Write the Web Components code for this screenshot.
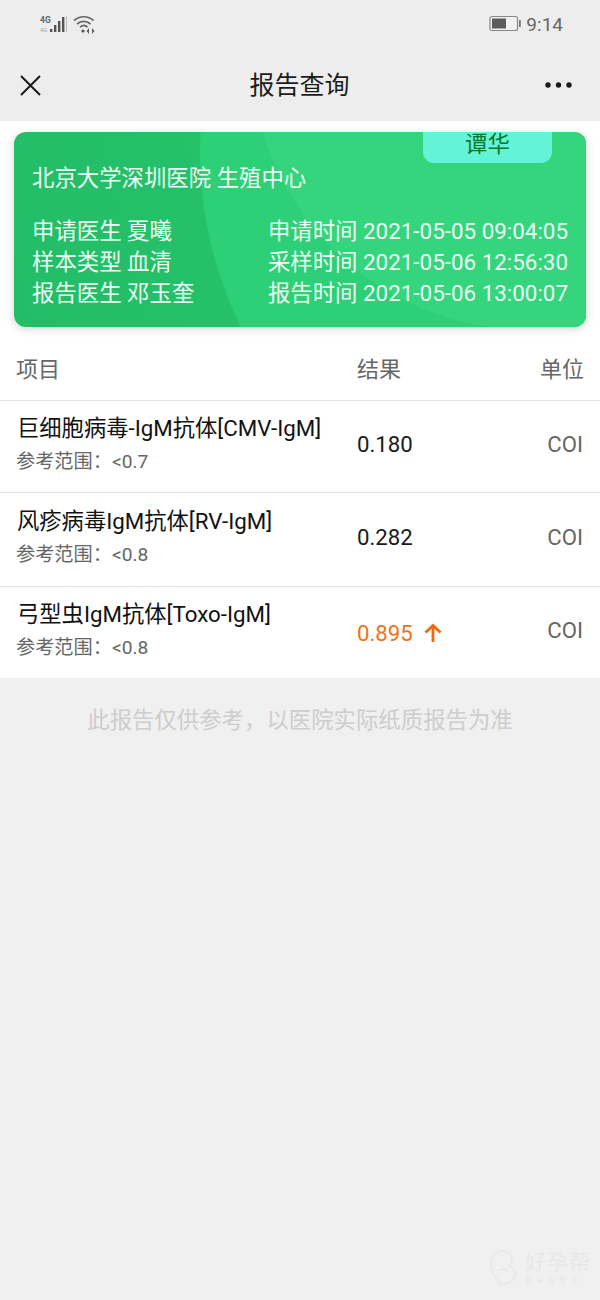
<!DOCTYPE html>
<html lang="zh"><head><meta charset="utf-8"><style>
html,body{margin:0;padding:0;background:#f0f0f0}
body{width:600px;height:1300px;overflow:hidden;font-family:Roboto,"Noto Sans CJK SC",sans-serif}
</style></head><body>
<report-app></report-app>
<script>
const FONT='Roboto,"Noto Sans CJK SC",sans-serif';
class StatusBar extends HTMLElement{constructor(){super();this.attachShadow({mode:'open'}).innerHTML=`<style>
:host{display:flex;height:49px;box-sizing:border-box;padding:0 37px 0 40px;align-items:flex-start;justify-content:space-between;color:#666}
.l{display:flex;gap:5px;margin-top:15px}.r{display:flex;align-items:flex-start;gap:5px;margin-top:15px}
.t{font-size:19px;line-height:20px;color:#666}
svg{display:block}
</style>
<div class="l">
<svg width="28" height="20" viewBox="0 0 28 20"><text x="0" y="8" font-family="Roboto" font-size="8.5" font-weight="700" fill="#666">4G</text><text x="0" y="17" font-family="Roboto" font-size="6" fill="#aaa">4G</text><g fill="#555"><rect x="10" y="14" width="2.4" height="3"/><rect x="14" y="10" width="2.4" height="7"/><rect x="18" y="6" width="2.4" height="11"/><rect x="22" y="2" width="2.4" height="15"/></g><rect x="26" y="1" width="1" height="16" fill="#bbb"/></svg>
<svg width="22" height="20" viewBox="0 0 22 20" fill="none" stroke="#666" stroke-width="1.7"><path d="M1 5.5C6.500 .5 15 .5 20.500 5.500M4 9C8 5.500 13.500 5.500 17.500 9M7 12.200C9.500 10 12.500 10 14.500 12.200"/><circle cx="10" cy="16" r="1.600" fill="#555" stroke="none"/><path d="M15.500 13.500v5M19.500 13.500v5" stroke-width="1"/><path d="M13.500 16l2-2v4zM21.500 16l-2-2v4z" fill="#555" stroke="none"/></svg>
</div>
<div class="r">
<svg width="32" height="18" viewBox="0 0 32 18"><rect x="1" y="1.500" width="27.500" height="14" rx="2" fill="#f0f0f0" stroke="#888" stroke-width="1.200"/><rect x="3" y="3.500" width="14" height="10" fill="#5c5c5c"/><rect x="30" y="5" width="1.800" height="7" rx=".6" fill="#777"/></svg>
<span class="t">9:14</span></div>`}}
class NavBar extends HTMLElement{constructor(){super();this.attachShadow({mode:'open'}).innerHTML=`<style>
:host{display:flex;height:72px;box-sizing:border-box;padding:0 28px 0 20px;align-items:center;justify-content:space-between;color:#1c1c1c}
.t{font-size:25px;line-height:30px;font-weight:400;flex:1;text-align:center;margin-left:13px;transform:translateY(1px)}svg{display:block}
</style>
<svg width="21" height="21" viewBox="0 0 21 21" stroke="#1a1a1a" stroke-width="2" fill="none"><path d="M1 1l19 19M20 1L1 20"/></svg>
<div class="t"><slot></slot></div>
<svg width="27" height="8" viewBox="0 0 27 8" fill="#1a1a1a"><circle cx="3" cy="4" r="2.700"/><circle cx="13.500" cy="4" r="2.700"/><circle cx="24" cy="4" r="2.700"/></svg>`}}
class ReportCard extends HTMLElement{constructor(){super();this.attachShadow({mode:'open'}).innerHTML=`<style>
:host{display:block;position:relative;height:195px;box-sizing:border-box;border-radius:12px;overflow:hidden;background:linear-gradient(75deg,#22bd66,#2ac971);padding:30px 18px 0 18px;color:#eefff5}
.c1,.c2{position:absolute;border-radius:50%}
.c1{left:186px;top:-374px;width:788px;height:788px;background:#2dcf77}
.c2{left:236px;top:-362px;width:560px;height:560px;background:#34d57d}
.bg{position:absolute;inset:0;overflow:hidden}
.tag{position:absolute;left:409px;top:0;width:129px;height:31px;box-sizing:border-box;border-radius:0 0 11px 11px;background:#63f3d8;color:#0a7a22;text-align:center;font-size:22.400px;line-height:25px}
.h{position:relative;font-size:22.400px;line-height:32px}
.g{position:relative;display:flex;justify-content:space-between;margin-top:22px;font-size:22.400px;line-height:31px}
.right{white-space:nowrap}
</style><div class="bg"><div class="c1"></div><div class="c2"></div></div>
<div class="tag">谭华</div>
<div class="h">北京大学深圳医院 生殖中心</div>
<div class="g"><div>申请医生 夏曦<br>样本类型 血清<br>报告医生 邓玉奎</div>
<div class="right">申请时间 2021-05-05 09:04:05<br>采样时间 2021-05-06 12:56:30<br>报告时间 2021-05-06 13:00:07</div></div>`}}
const grid='display:grid;grid-template-columns:341px 1fr 80px;';
class TableHead extends HTMLElement{constructor(){super();this.attachShadow({mode:'open'}).innerHTML=`<style>
:host{${grid}height:57px;box-sizing:border-box;padding:0 16px 10px;align-items:center;background:#fff;border-bottom:1px solid #e4e4e4;font-size:22px;color:#666}
.u{text-align:right}</style><div>项目</div><div>结果</div><div class="u">单位</div>`}}
class ResultRow extends HTMLElement{constructor(){super();const a=k=>this.getAttribute(k);const hi=this.hasAttribute('high');this.attachShadow({mode:'open'}).innerHTML=`<style>
:host{${grid}box-sizing:border-box;padding:0 16px 6px;align-items:center;background:#fff;border-bottom:1px solid #e4e4e4}
:host(:last-child){border-bottom:0}
.n{font-size:22.300px;line-height:30px;color:#111;white-space:nowrap;margin-top:-1px;margin-left:1px}
.r{font-size:19.200px;line-height:24px;color:#666;margin-top:7px}
.v{font-size:22.200px;color:${hi?'#ee7317':'#1a1a1a'};display:flex;align-items:center;gap:10px;${hi?'transform:translateY(3px);':''}}
.u{text-align:right;font-size:22.200px;color:#666;margin-right:1px}
svg{display:block}
</style><div><div class="n">${a('name')}</div><div class="r">参考范围：&lt;${a('range')}</div></div>
<div class="v">${a('value')}${hi?'<svg width="20" height="20" viewBox="0 0 20 20" fill="none" stroke="#ee6a0f" stroke-width="2.800"><path d="M10 19V2.500M2.500 9.500L10 2.500l7.500 7"/></svg>':''}</div><div class="u">COI</div>`}}
class WaterMark extends HTMLElement{constructor(){super();this.attachShadow({mode:'open'}).innerHTML=`<style>
:host{position:absolute;left:490px;top:1250px;display:flex;gap:9px;color:#e7e7e7}
.a{font-size:21px;line-height:24px;white-space:nowrap;letter-spacing:1px}.b{font-size:7px;line-height:10px;letter-spacing:4.500px;white-space:nowrap;margin-top:2px}
</style><svg width="26" height="38" viewBox="0 0 26 38" fill="none" stroke="#e7e7e7" stroke-width="1.500"><path d="M12 35C4 28 1 20 1 13C1 6 6 1 12 1C18 1 22 5 22 10C22 13 20 15 18 16C22 17 25 20 25 24C25 29 20 33 12 35Z"/><path d="M8 21C11 18 16 19 18 22"/></svg><div><div class="a">好孕帮</div><div class="b">备孕好帮手</div></div>`}}
class ReportApp extends HTMLElement{constructor(){super();this.attachShadow({mode:'open'}).innerHTML=`<style>
:host{display:block;position:relative;height:1300px;font-family:${FONT};background:#f0f0f0}
.top{background:#ededed}
.cardwrap{background:#fff;padding:11px 14px 17px}
report-card{box-shadow:0 2px 8px rgba(40,60,50,.22)}
.foot{text-align:center;font-size:22.400px;line-height:28px;color:#cdcdcd;margin-top:28px}
.rows result-row:nth-child(1){height:92px}.rows result-row:nth-child(2){height:94px}.rows result-row:nth-child(3){height:91px}
</style>
<div class="top"><status-bar></status-bar><nav-bar>报告查询</nav-bar></div>
<div class="cardwrap"><report-card></report-card></div>
<table-head></table-head>
<div class="rows">
<result-row name="巨细胞病毒-IgM抗体[CMV-IgM]" range="0.7" value="0.180"></result-row>
<result-row name="风疹病毒IgM抗体[RV-IgM]" range="0.8" value="0.282"></result-row>
<result-row name="弓型虫IgM抗体[Toxo-IgM]" range="0.8" value="0.895" high></result-row>
</div>
<div class="foot">此报告仅供参考，以医院实际纸质报告为准</div>
<water-mark></water-mark>`}}
customElements.define('status-bar',StatusBar);
customElements.define('nav-bar',NavBar);
customElements.define('report-card',ReportCard);
customElements.define('table-head',TableHead);
customElements.define('result-row',ResultRow);
customElements.define('water-mark',WaterMark);
customElements.define('report-app',ReportApp);
</script></body></html>
